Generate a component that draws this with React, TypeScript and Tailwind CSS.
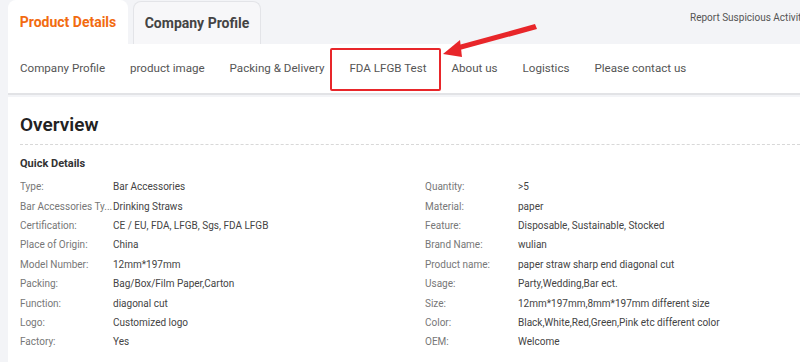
import React from 'react';

const left: [string, string][] = [
  ['Type:', 'Bar Accessories'],
  ['Bar Accessories Ty...', 'Drinking Straws'],
  ['Certification:', 'CE / EU, FDA, LFGB, Sgs, FDA LFGB'],
  ['Place of Origin:', 'China'],
  ['Model Number:', '12mm*197mm'],
  ['Packing:', 'Bag/Box/Film Paper,Carton'],
  ['Function:', 'diagonal cut'],
  ['Logo:', 'Customized logo'],
  ['Factory:', 'Yes'],
];

const right: [string, string][] = [
  ['Quantity:', '>5'],
  ['Material:', 'paper'],
  ['Feature:', 'Disposable, Sustainable, Stocked'],
  ['Brand Name:', 'wulian'],
  ['Product name:', 'paper straw sharp end diagonal cut'],
  ['Usage:', 'Party,Wedding,Bar ect.'],
  ['Size:', '12mm*197mm,8mm*197mm different size'],
  ['Color:', 'Black,White,Red,Green,Pink etc different color'],
  ['OEM:', 'Welcome'],
];

const navItems = [
  'Company Profile',
  'product image',
  'Packing & Delivery',
  'FDA LFGB Test',
  'About us',
  'Logistics',
  'Please contact us',
];

const Column = ({ rows }: { rows: [string, string][] }) => (
  <div className="flex flex-col">
    {rows.map(([k, v]) => (
      <div key={k} className="flex h-[19.4px] items-center text-[10px]">
        <div className="w-[93px] shrink-0 overflow-hidden whitespace-nowrap text-[#777]">{k}</div>
        <div className="whitespace-nowrap text-[#444]">{v}</div>
      </div>
    ))}
  </div>
);

export default function App() {
  return (
    <div
      className="relative h-[362px] w-[800px] overflow-hidden bg-[#f3f4f7] pl-2"
      style={{ fontFamily: 'Roboto, "Liberation Sans", sans-serif' }}
    >
      {/* tab bar */}
      <div className="flex h-[44px] items-end">
        <div className="flex h-[44px] w-[120px] shrink-0 items-center justify-center rounded-t-lg bg-white text-[14px] font-bold text-[#f26b10]">
          Product Details
        </div>
        <div className="ml-[5px] flex h-[43px] w-[128px] shrink-0 items-center justify-center rounded-t-lg border border-b-0 border-[#e3e4e8] bg-[#f7f7f9] text-[14px] font-bold text-[#444]">
          Company Profile
        </div>
        <div className="ml-[429px] shrink-0 self-start pt-[10px] text-[10px] whitespace-nowrap text-[#555]">
          Report Suspicious Activity
        </div>
      </div>

      {/* sub nav */}
      <div className="flex h-[51px] items-center gap-[25px] border-b-2 border-[#e2e3e6] bg-white pl-3 text-[11.6px] text-[#555]">
        {navItems.map((n) => (
          <span key={n} className="whitespace-nowrap">
            {n}
          </span>
        ))}
      </div>

      {/* content */}
      <div className="mt-[2px] h-[300px] bg-white pt-[14px] pl-3">
        <div className="border-b border-dashed border-[#d8d8d8] pb-[4px] text-[19px] font-semibold text-[#222]">
          Overview
        </div>
        <div className="mt-[11px] text-[11px] font-bold text-[#333]">Quick Details</div>
        <div className="mt-[5px] grid grid-cols-[405px_1fr]">
          <Column rows={left} />
          <Column rows={right} />
        </div>
      </div>

      {/* annotation */}
      <div className="absolute top-[48px] left-[330px] h-[43px] w-[111px] rounded-[2px] border-2 border-[#e8262a]" />
      <svg className="absolute top-0 left-0" width="800" height="362">
        <polygon points="535,24 537,29 456,51 455,46" fill="#e8262a" />
        <polygon points="443,54 460,40 462,57" fill="#e8262a" />
      </svg>
    </div>
  );
}
